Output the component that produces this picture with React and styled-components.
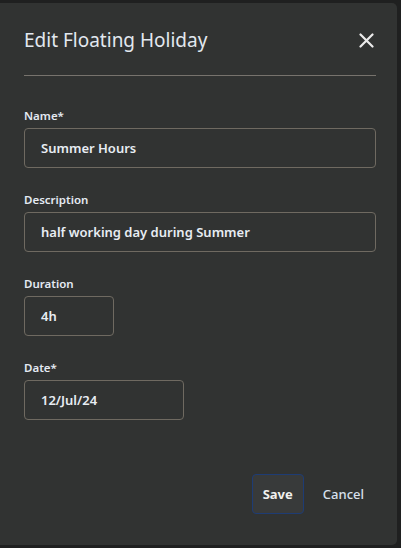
import React from 'react';
import styled, { createGlobalStyle } from 'styled-components';

const GlobalStyle = createGlobalStyle`
  html, body {
    margin: 0;
    padding: 0;
    background: #1f2020;
    height: 100%;
  }
  body {
    font-family: "Noto Sans", "Open Sans", sans-serif;
    overflow: hidden;
  }
`;

const Page = styled.div`
  width: 401px;
  height: 548px;
  padding-top: 3px;
  box-sizing: border-box;
`;

const Dialog = styled.div`
  width: 397px;
  height: 542px;
  box-sizing: border-box;
  background: #313332;
  border-radius: 0 5px 5px 0;
  padding: 21px 21px 0 24px;
  display: flex;
  flex-direction: column;
`;

const Header = styled.div`
  display: flex;
  align-items: center;
  justify-content: space-between;
  height: 32px;
  padding-bottom: 19px;
  border-bottom: 1px solid #77736d;
`;

const Title = styled.h2`
  margin: 0;
  font-size: 19px;
  line-height: 32px;
  font-weight: 400;
  color: #e2e8ef;
`;

const CloseButton = styled.button`
  border: none;
  background: none;
  padding: 0;
  margin-right: 2px;
  width: 16px;
  height: 16px;
  display: flex;
  align-items: center;
  justify-content: center;
  cursor: pointer;
`;

const Form = styled.form`
  display: flex;
  flex-direction: column;
  gap: 24px;
  margin-top: 32px;
`;

const Field = styled.div`
  display: flex;
  flex-direction: column;
  align-items: flex-start;
  gap: 4px;
`;

const Label = styled.label`
  font-size: 11.5px;
  line-height: 16px;
  font-weight: 600;
  color: #e4eaf2;
`;

const Input = styled.div`
  width: ${p => p.$width || '100%'};
  height: 40px;
  box-sizing: border-box;
  border: 1px solid #6f6a61;
  border-radius: 4px;
  padding: 0 16px;
  display: flex;
  align-items: center;
  font-size: 13px;
  font-weight: 600;
  color: #e8edf3;
`;

const Footer = styled.div`
  margin-top: auto;
  margin-bottom: 31px;
  display: flex;
  justify-content: flex-end;
  align-items: center;
  gap: 7px;
`;

const Button = styled.button`
  height: 40px;
  box-sizing: border-box;
  font-family: inherit;
  font-size: 13px;
  border-radius: 4px;
  cursor: pointer;
  border: 1px solid ${p => (p.$primary ? '#1e3c74' : 'transparent')};
  background: ${p => (p.$primary ? '#383a3a' : 'transparent')};
  color: ${p => (p.$primary ? '#f1f1ee' : '#d8e0ec')};
  font-weight: ${p => (p.$primary ? 700 : 500)};
  padding: ${p => (p.$primary ? '0 10px' : '0 11px')};
`;

const CloseIcon = () => (
  <svg width="15" height="15" viewBox="0 0 15 15">
    <path d="M1.5 1.5 L13.5 13.5 M13.5 1.5 L1.5 13.5" stroke="#ebebeb" strokeWidth="2.2" strokeLinecap="round" />
  </svg>
);

export default function App() {
  return (
    <Page>
      <GlobalStyle />
      <Dialog>
        <Header>
          <Title>Edit Floating Holiday</Title>
          <CloseButton aria-label="Close">
            <CloseIcon />
          </CloseButton>
        </Header>
        <Form>
          <Field>
            <Label>Name*</Label>
            <Input>Summer Hours</Input>
          </Field>
          <Field>
            <Label>Description</Label>
            <Input>half working day during Summer</Input>
          </Field>
          <Field>
            <Label>Duration</Label>
            <Input $width="90px">4h</Input>
          </Field>
          <Field>
            <Label>Date*</Label>
            <Input $width="160px">12/Jul/24</Input>
          </Field>
        </Form>
        <Footer>
          <Button $primary>Save</Button>
          <Button>Cancel</Button>
        </Footer>
      </Dialog>
    </Page>
  );
}
